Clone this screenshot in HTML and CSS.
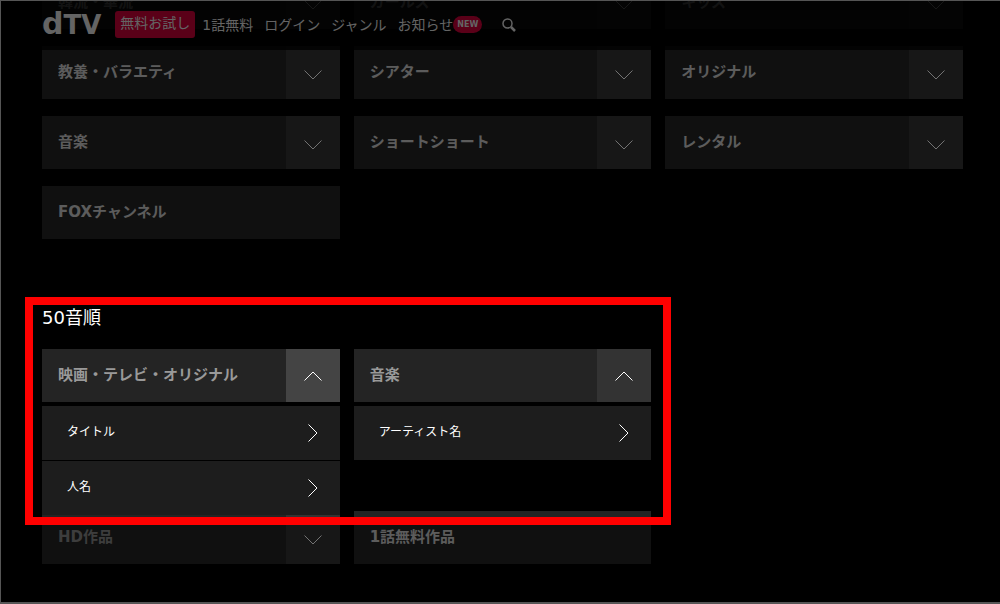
FILE: index.html
```html
<!DOCTYPE html>
<html lang="ja">

<head>
  <meta charset="UTF-8">
  <meta name="viewport" content="width=device-width, initial-scale=1.0">
  <title>dTV</title>
  <link rel="stylesheet" href="styles.css">
</head>

<body>
  <svg width="0" height="0" class="defs">
    <symbol id="down" viewBox="0 0 18 10"><path d="M.5 .5 L9 9 L17.5 .5" /></symbol>
    <symbol id="up" viewBox="0 0 18 10"><path d="M.5 9.500 L9 1 L17.5 9.500" /></symbol>
    <symbol id="right" viewBox="0 0 10 18"><path d="M.5 .5 L9 9 L.5 17.5" /></symbol>
  </svg>

  <div class="page">
    <header class="header">
      <a href="#" class="logo"><span class="logo-d">d</span>TV</a>
      <a href="#" class="trial">無料お試し</a>
      <nav class="nav">
        <a href="#">1話無料</a>
        <a href="#">ログイン</a>
        <a href="#">ジャンル</a>
        <a href="#">お知らせ<span class="badge">NEW</span></a>
      </nav>
      <button type="button" class="search" aria-label="検索">
        <svg width="14" height="14" viewBox="0 0 14 14">
          <circle cx="5.500" cy="5.500" r="4.500" stroke-width="1.500" />
          <path d="M9 9 L13 13" stroke-width="2.500" />
        </svg>
      </button>
    </header>

    <main class="main">
      <div class="grid">
        <button type="button" class="tile">韓流・華流<span class="arrow"><svg><use href="#down" /></svg></span></button>
        <button type="button" class="tile">ガールズ<span class="arrow"><svg><use href="#down" /></svg></span></button>
        <button type="button" class="tile">キッズ<span class="arrow"><svg><use href="#down" /></svg></span></button>
        <button type="button" class="tile">教養・バラエティ<span class="arrow"><svg><use href="#down" /></svg></span></button>
        <button type="button" class="tile">シアター<span class="arrow"><svg><use href="#down" /></svg></span></button>
        <button type="button" class="tile">オリジナル<span class="arrow"><svg><use href="#down" /></svg></span></button>
        <button type="button" class="tile">音楽<span class="arrow"><svg><use href="#down" /></svg></span></button>
        <button type="button" class="tile">ショートショート<span class="arrow"><svg><use href="#down" /></svg></span></button>
        <button type="button" class="tile">レンタル<span class="arrow"><svg><use href="#down" /></svg></span></button>
        <a href="#" class="tile">FOXチャンネル</a>
      </div>

      <section class="kana">
        <h2>50音順</h2>
        <div class="grid kana-grid">
          <div class="open">
            <button type="button" class="tile active">映画・テレビ・オリジナル<span class="arrow"><svg><use href="#up" /></svg></span></button>
            <div class="submenu">
              <a href="#">タイトル<svg><use href="#right" /></svg></a>
              <a href="#">人名<svg><use href="#right" /></svg></a>
            </div>
          </div>
          <div class="open">
            <button type="button" class="tile">音楽<span class="arrow"><svg><use href="#up" /></svg></span></button>
            <div class="submenu">
              <a href="#">アーティスト名<svg><use href="#right" /></svg></a>
            </div>
          </div>
          <button type="button" class="tile muted first">HD作品<span class="arrow"><svg><use href="#down" /></svg></span></button>
          <a href="#" class="tile">1話無料作品</a>
        </div>
        <div class="spotlight"></div>
      </section>
    </main>
  </div>
</body>

</html>
```

FILE: styles.css
```css
* {
  box-sizing: border-box;
}

body {
  margin: 0;
  background: #000;
  color: #fff;
  font-family: "DejaVu Sans", "Noto Sans CJK JP", sans-serif;
}

a {
  color: inherit;
  text-decoration: none;
}

button {
  border: none;
  font-family: inherit;
  cursor: pointer;
}

svg {
  fill: none;
  stroke: currentColor;
}

.defs {
  position: absolute;
}

.page {
  position: relative;
  min-height: 100vh;
  overflow: hidden;
  border: 1px solid #555;
  border-right: none;
  border-bottom-width: 2px;
}

/* header */
.header {
  position: absolute;
  top: 0;
  left: 0;
  right: 0;
  z-index: 2;
  height: 49px;
  padding: 0 41px 2px;
  display: flex;
  align-items: center;
  background: rgba(0, 0, 0, 0.8);
  color: #ddd;
  font-size: 14px;
}

.logo {
  margin-right: 14px;
  font-size: 26px;
  font-weight: bold;
  line-height: 30px;
}

.logo-d {
  font-size: 30px;
}

.trial {
  margin-right: 7px;
  padding: 0 5px 2px;
  border-radius: 3px;
  background: #c80037;
  line-height: 25px;
}

.nav {
  display: flex;
  gap: 11px;
  line-height: 24px;
}

.nav a {
  display: flex;
  align-items: center;
}

.badge {
  padding: 0 4px;
  border-radius: 9px;
  background: #c80037;
  font-size: 8px;
  font-weight: bold;
  line-height: 17px;
}

.search {
  display: flex;
  margin-left: 20px;
  padding: 0;
  background: none;
  color: #ddd;
}

/* genre tiles */
.main {
  margin-top: -25px;
  padding: 0 37px 38px 41px;
}

.grid {
  display: grid;
  grid-template-columns: repeat(3, 1fr);
  gap: 17px 14px;
}

.tile {
  display: flex;
  justify-content: space-between;
  width: 100%;
  height: 53px;
  padding: 0 0 0 16px;
  background: #242424;
  color: #ccc;
  font-size: 15px;
  font-weight: bold;
  line-height: 52px;
  text-align: left;
}

.arrow {
  display: flex;
  align-items: center;
  justify-content: center;
  width: 54px;
  height: 53px;
  padding-top: 4px;
  background: #333;
  color: #fff;
}

.arrow svg {
  width: 18px;
  height: 10px;
}

.active .arrow {
  background: #444;
}

.muted {
  color: #888;
}

/* 50 on list */
.kana {
  position: relative;
  margin-top: 67px;
}

.kana h2 {
  margin: 0 0 19px;
  font-size: 18px;
  font-weight: normal;
  line-height: 24px;
}

.kana-grid {
  row-gap: 109px;
}

.first {
  grid-column: 1;
}

.open {
  position: relative;
}

.open .tile {
  color: #999;
}

.open .arrow {
  padding-top: 0;
}

.submenu {
  position: absolute;
  top: 57px;
  left: 0;
  right: 0;
  z-index: 1;
  display: flex;
  flex-direction: column;
  gap: 1px;
  background: #000;
}

.submenu a {
  display: flex;
  justify-content: space-between;
  height: 54px;
  padding: 0 22px 0 25px;
  background: #1d1d1d;
  font-size: 12px;
  line-height: 52px;
}

.submenu svg {
  align-self: center;
  width: 10px;
  height: 18px;
}

.spotlight {
  position: absolute;
  top: -9px;
  bottom: 39px;
  left: -17px;
  right: calc(33.33% - 15px);
  z-index: 3;
  border: 8px solid #f00;
  box-shadow: 0 0 0 2000px rgba(0, 0, 0, 0.55);
  pointer-events: none;
}
```
